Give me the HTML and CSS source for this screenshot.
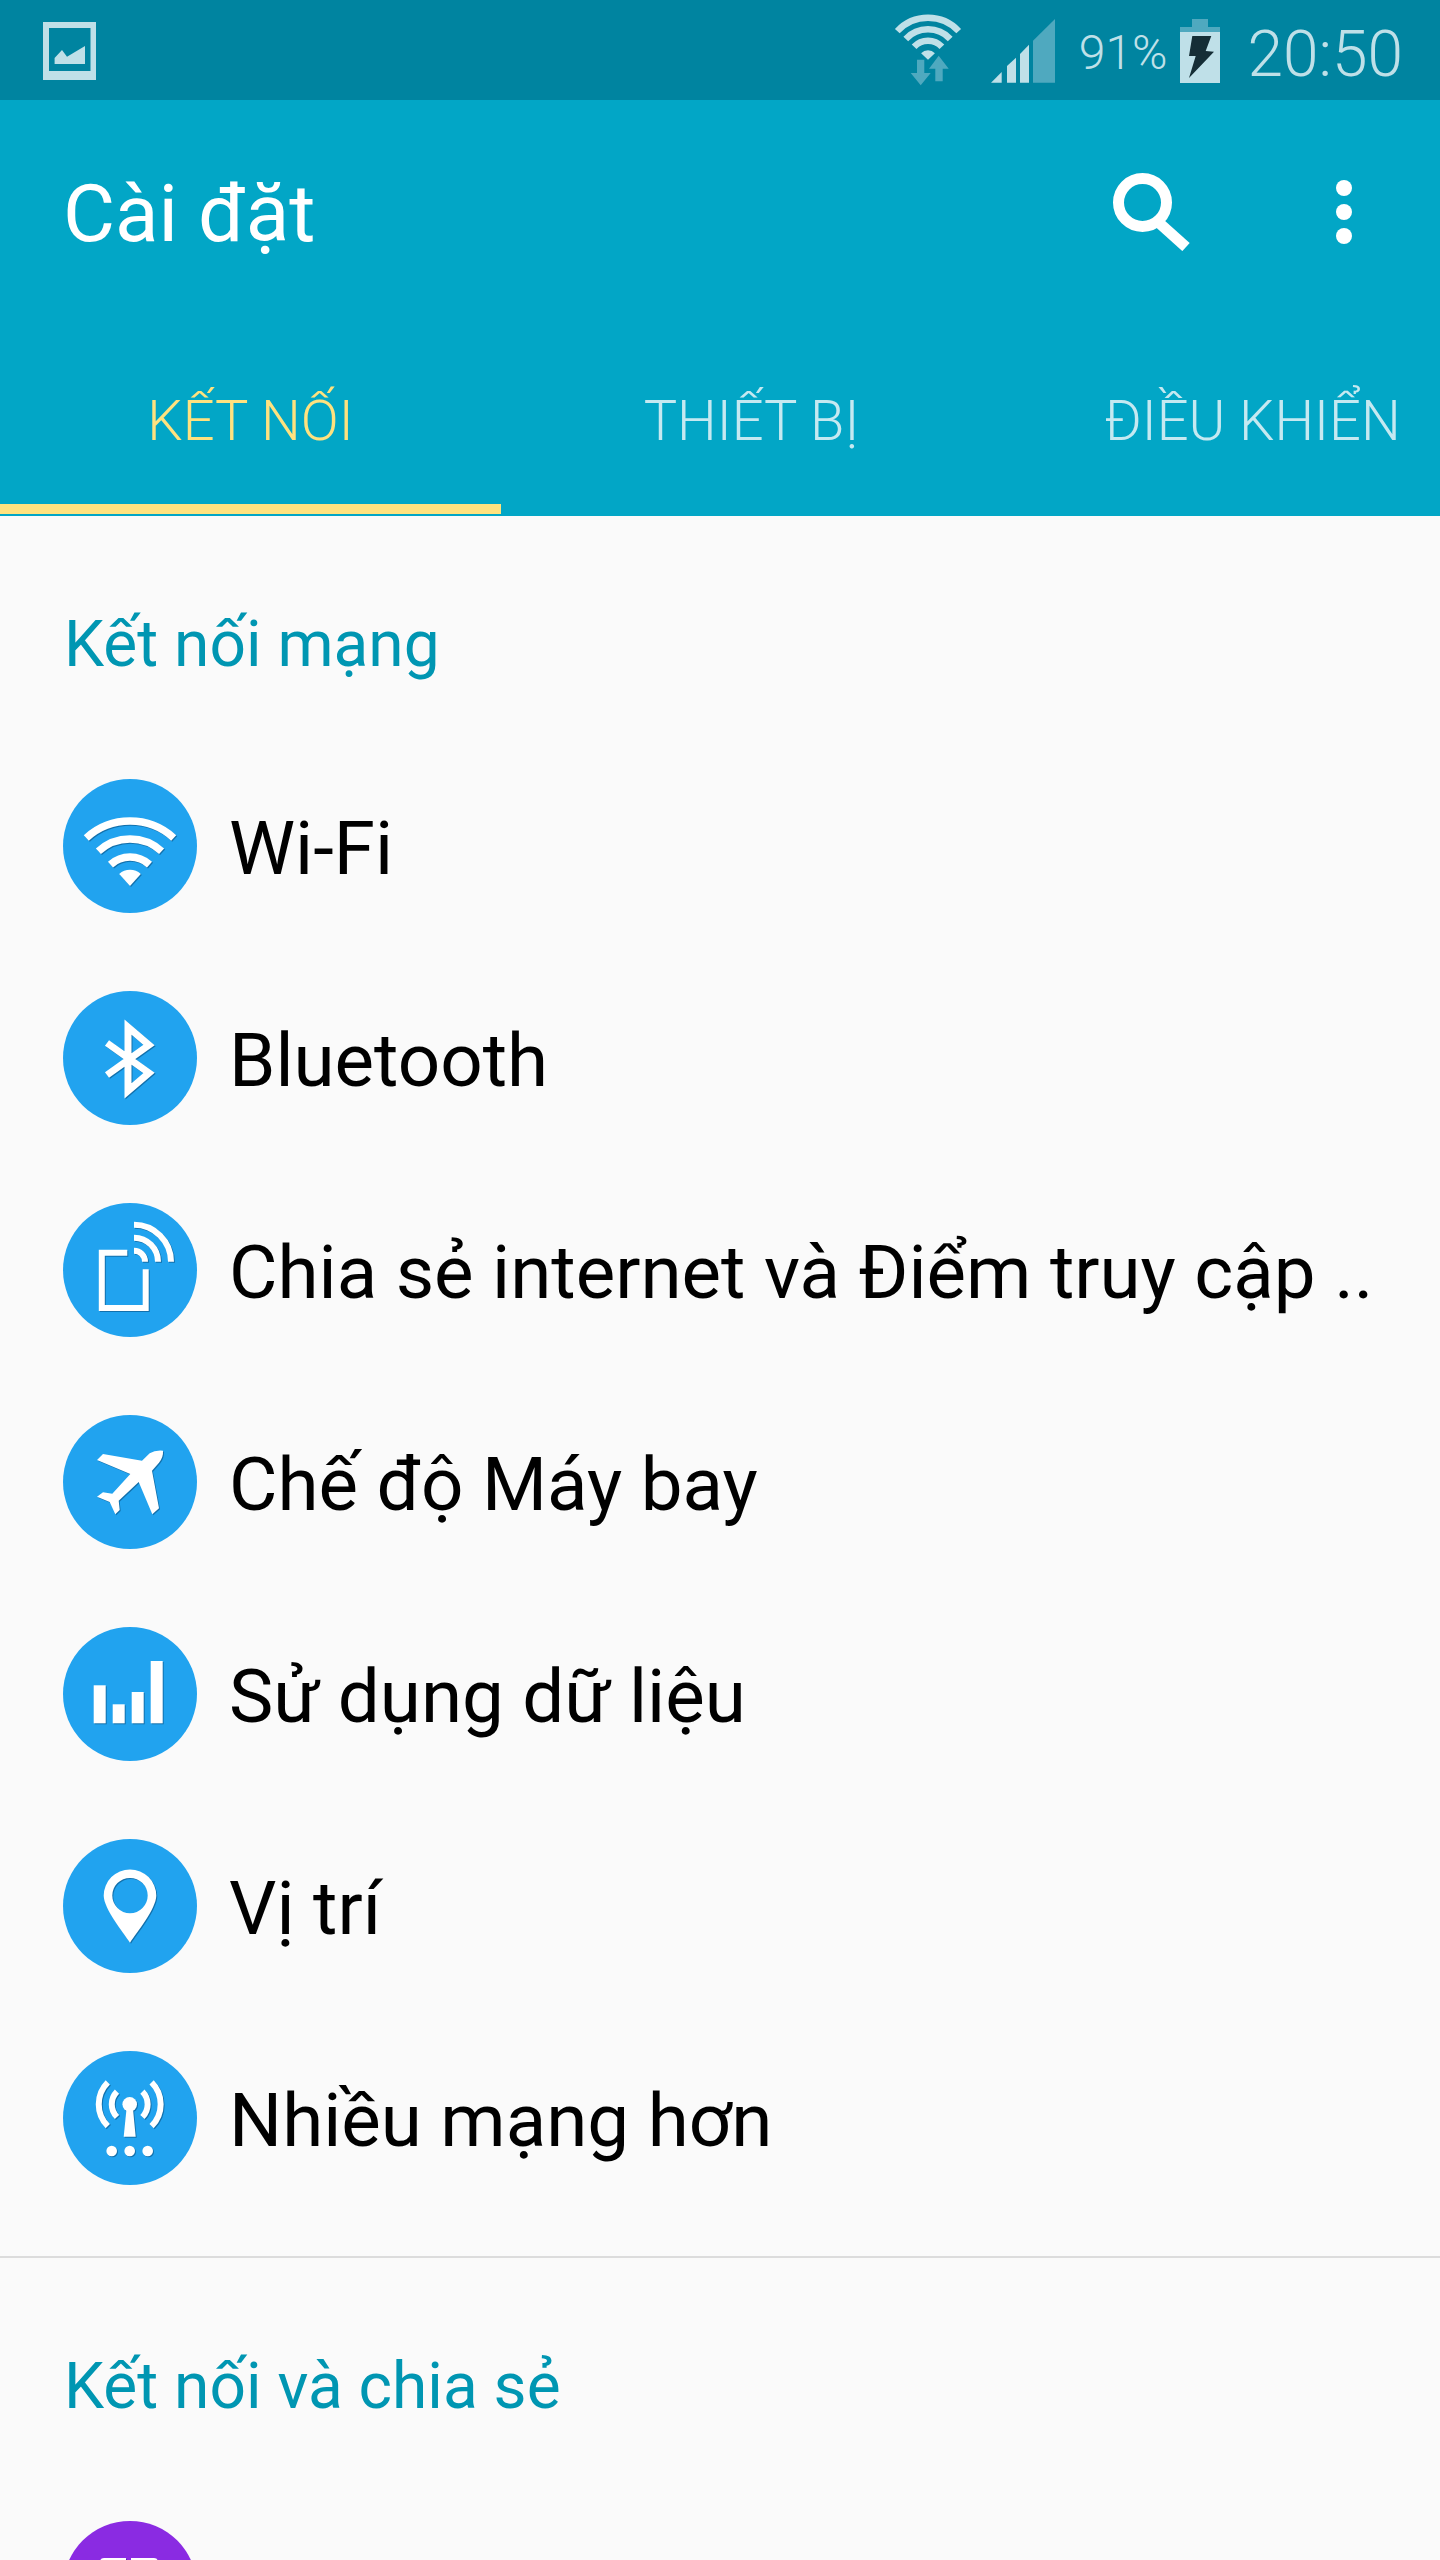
FILE: index.html
```html
<!DOCTYPE html>
<html lang="vi">
<head>
  <meta charset="UTF-8">
  <title>Cài đặt</title>
  <link rel="stylesheet" href="styles.css">
</head>
<body>
<div class="phone">
  <div class="statusbar">
    <svg class="st-image" viewBox="0 0 53 58">
      <path class="st-on" fill-rule="evenodd" d="M0 0H53V58H0ZM6 6V49H47.500V6Z"/>
      <path class="st-on" d="M11.600 42V36L19 28L24 34.700L42 24V42Z"/>
    </svg>
    <svg class="st-wifi" viewBox="0 0 70 76">
      <g class="st-arcs">
        <path d="M4.300 18.100A42 42 0 0 1 65.700 18.100"/>
        <path d="M12.800 26A30.400 30.400 0 0 1 57.200 26"/>
        <path d="M21.100 33.800A19 19 0 0 1 48.900 33.800"/>
      </g>
      <path class="st-on" d="M28.100 40.300A9.400 9.400 0 0 1 41.900 40.300L35 46.700Z"/>
      <path class="st-dim" d="M24 46.700H31.300V60H37.700L27.700 72.300L17.700 60H24Z"/>
      <path class="st-dim" d="M42.300 68.300V55.700H36L45.700 42.700L55.700 55.700H49.700V68.300Z"/>
    </svg>
    <svg class="st-signal" viewBox="0 0 64 64">
      <path class="st-on" d="M0 63.700L10.700 53V63.700Z"/>
      <path class="st-on" d="M16 63.700V47L25 38.700V63.700Z"/>
      <path class="st-on" d="M29 63.700V35L38 25.700V63.700Z"/>
      <path class="st-dim" d="M42 63.700V21.700L64 0V63.700Z"/>
    </svg>
    <span class="st-percent">91%</span>
    <svg class="st-battery" viewBox="0 0 40 64">
      <path class="st-dim" d="M12 0H28V8H40V13H0V8H12Z"/>
      <rect class="st-on" x="0" y="13" width="40" height="51"/>
      <path class="st-bolt" d="M12.300 17H31.300L25.700 32L34 32.700L9 59L15.700 37H9Z"/>
    </svg>
    <span class="st-time">20:50</span>
  </div>

  <div class="appbar">
    <div class="title-row">
      <span class="title">Cài đặt</span>
      <svg class="search" viewBox="0 0 78 78">
        <circle cx="29.500" cy="29.500" r="24"/>
        <line x1="44" y1="48" x2="73" y2="74"/>
      </svg>
      <div class="more">
        <span class="dot"></span>
        <span class="dot"></span>
        <span class="dot"></span>
      </div>
    </div>
    <div class="tabs">
      <div class="tab active">KẾT NỐI</div>
      <div class="tab">THIẾT BỊ</div>
      <div class="tab">ĐIỀU KHIỂN</div>
    </div>
  </div>

  <div class="section-title">Kết nối mạng</div>

  <div class="row">
    <svg class="circle" viewBox="0 0 134 134">
      <circle class="disc" cx="67" cy="67" r="67"/>
      <g class="glyph">
        <g class="line" stroke-width="7.500">
          <path d="M23.300 59A65 65 0 0 1 110.700 59"/>
          <path d="M35.400 72.300A47 47 0 0 1 98.600 72.300"/>
          <path d="M47.500 85.600A29 29 0 0 1 86.500 85.600"/>
        </g>
        <path d="M56.200 95A16 16 0 0 1 77.800 95L67 107Z"/>
      </g>
    </svg>
    <span class="row-text">Wi-Fi</span>
  </div>

  <div class="row">
    <svg class="circle" viewBox="0 0 134 134">
      <circle class="disc" cx="67" cy="67" r="67"/>
      <g class="glyph">
        <path class="line" stroke-width="7" stroke-miterlimit="10" d="M44 84L86 54L65 36V100L86 82L44 52"/>
      </g>
    </svg>
    <span class="row-text">Bluetooth</span>
  </div>

  <div class="row">
    <svg class="circle" viewBox="0 0 134 134">
      <circle class="disc" cx="67" cy="67" r="67"/>
      <g class="glyph">
        <g class="line" stroke-width="6">
          <path d="M64.300 49.800H38.800V105H82.700V66.300"/>
          <path d="M71 21.700A37 37 0 0 1 108 58.700"/>
          <path d="M71 34.700A24 24 0 0 1 95 58.700"/>
          <path d="M71 47.700A11 11 0 0 1 82 58.700"/>
        </g>
      </g>
    </svg>
    <span class="row-text">Chia sẻ internet và Điểm truy cập ..</span>
  </div>

  <div class="row">
    <svg class="circle" viewBox="0 0 134 134">
      <circle class="disc" cx="67" cy="67" r="67"/>
      <g class="glyph">
        <path d="M34 45L40 39L79 45.700L86.700 38.300Q92 35 100 35.700Q100.500 42 96 47.700L89 55.700L96 93.300L89.300 99.300L75.700 67L55.700 85.700L56.700 95L52.300 99.300L46.700 87L34 81.700L40 77.300L49.300 78.700L67.300 59Z"/>
      </g>
    </svg>
    <span class="row-text">Chế độ Máy bay</span>
  </div>

  <div class="row">
    <svg class="circle" viewBox="0 0 134 134">
      <circle class="disc" cx="67" cy="67" r="67"/>
      <g class="glyph">
        <rect x="30.700" y="58.300" width="12" height="38"/>
        <rect x="49.700" y="77.300" width="12" height="19"/>
        <rect x="68.700" y="65" width="12" height="31.300"/>
        <rect x="87.700" y="34" width="12" height="62.300"/>
      </g>
    </svg>
    <span class="row-text">Sử dụng dữ liệu</span>
  </div>

  <div class="row">
    <svg class="circle" viewBox="0 0 134 134">
      <circle class="disc" cx="67" cy="67" r="67"/>
      <g class="glyph">
        <path fill-rule="evenodd" d="M67 103.700C60 93 41 70 40.700 56.700A26.300 26.300 0 0 1 93.300 56.700C93 70 74 93 67 103.700ZM67 38.900A17.700 17.700 0 1 0 67 74.300A17.700 17.700 0 1 0 67 38.900Z"/>
      </g>
    </svg>
    <span class="row-text">Vị trí</span>
  </div>

  <div class="row">
    <svg class="circle" viewBox="0 0 134 134">
      <circle class="disc" cx="67" cy="67" r="67"/>
      <g class="glyph">
        <g class="line" stroke-width="6">
          <path d="M44.800 31.400A31 31 0 0 0 44.800 75.200"/>
          <path d="M88.600 31.400A31 31 0 0 1 88.600 75.200"/>
          <path d="M54 40.600A18 18 0 0 0 54 66"/>
          <path d="M79.400 40.600A18 18 0 0 1 79.400 66"/>
        </g>
        <circle cx="66.700" cy="53.300" r="7.300"/>
        <path d="M63.500 58H70L72.700 85.700H60.700Z"/>
        <circle cx="48.700" cy="100" r="5.300"/>
        <circle cx="66.700" cy="100" r="5.300"/>
        <circle cx="84.700" cy="100" r="5.300"/>
      </g>
    </svg>
    <span class="row-text">Nhiều mạng hơn</span>
  </div>

  <div class="divider"></div>

  <div class="section-title">Kết nối và chia sẻ</div>

  <div class="row">
    <svg class="circle" viewBox="0 0 134 134">
      <circle class="disc purple" cx="67" cy="67" r="67"/>
      <g class="glyph">
        <path d="M37 41Q37 37 41 37H63V60H37Z"/>
        <path d="M68 37H91Q95 37 95 41V60H68Z"/>
      </g>
    </svg>
  </div>
</div>
</body>
</html>
```

FILE: styles.css
```css
* {
  box-sizing: border-box;
}

body {
  margin: 0;
  background: #fafafa;
  font-family: Roboto, sans-serif;
}

.phone {
  width: 1440px;
  height: 2560px;
  overflow: hidden;
  background: #fafafa;
}

/* status bar */
.statusbar {
  height: 100px;
  display: flex;
  align-items: center;
  padding: 2px 37px 0 43px;
  background: #0084a0;
  color: #bfe0e8;
}

.st-image {
  width: 53px;
  height: 58px;
}

.st-on {
  fill: #bfe0e8;
}

.st-dim {
  fill: #4fa9bf;
}

.st-bolt {
  fill: #152e36;
}

.st-arcs {
  fill: none;
  stroke: #bfe0e8;
  stroke-width: 6.500;
}

.st-wifi {
  width: 70px;
  height: 76px;
  margin-left: auto;
}

.st-signal {
  width: 64px;
  height: 64px;
  margin-left: 28px;
}

.st-percent {
  margin-left: 24px;
  margin-top: 2px;
  font-size: 48px;
  font-weight: 300;
}

.st-battery {
  width: 40px;
  height: 64px;
  margin-left: 12px;
}

.st-time {
  margin-left: 28px;
  margin-top: 6px;
  font-size: 64px;
  font-weight: 300;
}

/* header */
.appbar {
  background: #02a6c6;
}

.title-row {
  height: 224px;
  display: flex;
  align-items: center;
  padding-right: 88px;
}

.title {
  margin-left: 63px;
  margin-right: auto;
  padding-top: 3px;
  font-size: 80px;
  color: #fff;
}

.search {
  width: 78px;
  height: 78px;
  margin-right: 145px;
  fill: none;
  stroke: #fff;
  stroke-width: 11;
}

.more {
  display: flex;
  flex-direction: column;
  gap: 8px;
}

.dot {
  width: 16px;
  height: 16px;
  border-radius: 50%;
  background: #fff;
}

.tabs {
  display: flex;
  padding-bottom: 2px;
}

.tab {
  flex: 0 0 501px;
  height: 190px;
  padding-top: 14px;
  display: flex;
  align-items: center;
  justify-content: center;
  border-bottom: 10px solid transparent;
  font-size: 56px;
  font-weight: 300;
  white-space: nowrap;
  color: #c5e9f1;
}

.tab.active {
  border-bottom-color: #ffe27f;
  color: #ffe27f;
}

/* list */
.section-title {
  height: 224px;
  padding: 90px 0 0 64px;
  font-size: 64px;
  line-height: 78px;
  color: #0096b2;
}

.row {
  height: 212px;
  display: flex;
  align-items: center;
  gap: 32px;
  padding-left: 63px;
}

.circle {
  flex: none;
  width: 134px;
  height: 134px;
}

.disc {
  fill: #21a3ef;
}

.disc.purple {
  fill: #8a2be2;
}

.glyph {
  fill: #fff;
  filter: drop-shadow(1px 1px 0 rgba(0, 50, 90, 0.45));
}

.line {
  fill: none;
  stroke: #fff;
}

.row-text {
  padding-top: 5px;
  font-size: 74.500px;
  white-space: nowrap;
  color: #000;
}

.divider {
  height: 2px;
  margin-top: 32px;
  background: #dcdcdc;
}
```
